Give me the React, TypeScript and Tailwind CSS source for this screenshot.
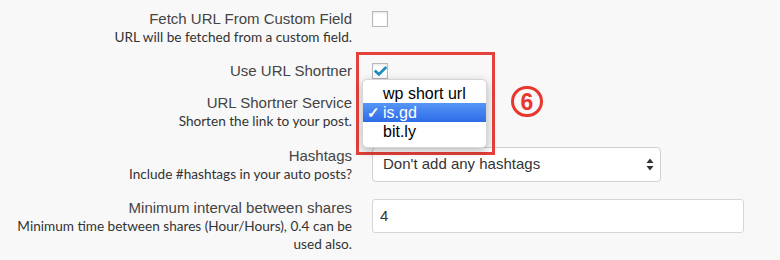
import { ReactNode } from 'react';

const labelFont = { fontFamily: '"Liberation Sans", Arial, sans-serif' };

function Checkbox({ checked = false }: { checked?: boolean }) {
  return (
    <div className="mt-[2px] w-4 h-4 bg-white border border-[#b4b9be] shadow-[inset_0_1px_2px_rgba(0,0,0,0.1)] flex items-center justify-center">
      {checked && (
        <svg width="13" height="11" viewBox="0 0 13 11">
          <path d="M1.8 5.6 L4.9 8.4 L11.3 2" fill="none" stroke="#1e8cbe" strokeWidth="2.8" strokeLinecap="square" />
        </svg>
      )}
    </div>
  );
}

function Row({ label, desc, height, children }: { label: string; desc?: ReactNode; height?: string; children?: ReactNode }) {
  return (
    <div className={`flex items-start gap-5 ${height ?? ''}`}>
      <div className="w-[352px] pl-3 shrink-0 text-right">
        <div className="text-[15px] leading-[19px] text-[#444]" style={labelFont}>{label}</div>
        {desc && (
          <div className="text-[13.6px] leading-[18px] text-[#333] font-['Lato',sans-serif]">{desc}</div>
        )}
      </div>
      <div className="relative flex-1">{children}</div>
    </div>
  );
}

export default function App() {
  return (
    <div className="relative w-[780px] h-[260px] bg-[#f8f8f8] pt-[9px] overflow-hidden">
      <Row label="Fetch URL From Custom Field" desc="URL will be fetched from a custom field." height="h-[52px]">
        <Checkbox />
      </Row>

      <Row label="Use URL Shortner" height="h-[32px]">
        <Checkbox checked />
      </Row>

      <Row label="URL Shortner Service" desc="Shorten the link to your post." height="h-[53px]">
        {/* open select popup */}
        <div
          className="absolute left-[-10px] top-[-14px] w-[125px] bg-white rounded-[5px] border border-[#d6d6d6] shadow-[0_3px_10px_rgba(0,0,0,0.28)] pt-1 pb-[6px] z-10"
          style={labelFont}
        >
          <div className="h-[19px] leading-[19px] pl-5 text-[16px] text-black">wp short url</div>
          <div className="relative h-[19px] leading-[19px] pl-5 text-[16px] text-white bg-gradient-to-b from-[#5795f6] to-[#2c6be6]">
            <span className="absolute left-[4px] top-0 text-[15px] font-bold">✓</span>
            is.gd
          </div>
          <div className="h-[19px] leading-[19px] pl-5 text-[16px] text-black">bit.ly</div>
        </div>
      </Row>

      <Row label="Hashtags" desc="Include #hashtags in your auto posts?" height="h-[52px]">
        <div className="mt-[1px] w-[289px] h-[35px] bg-white border border-[#d0d0d0] rounded-[4px] flex items-center justify-between pl-[10px] pr-[6px]">
          <span className="text-[15px] text-[#333]" style={labelFont}>Don't add any hashtags</span>
          <svg width="8" height="13" viewBox="0 0 8 13">
            <path d="M4 0.5 L7.5 5 L0.5 5 Z" fill="#333" />
            <path d="M4 12.5 L7.5 8 L0.5 8 Z" fill="#333" />
          </svg>
        </div>
      </Row>

      <Row
        label="Minimum interval between shares"
        desc="Minimum time between shares (Hour/Hours), 0.4 can be used also."
      >
        <div className="mt-[1px] w-[372px] h-[34px] bg-white border border-[#d6d6d6] rounded-[3px] flex items-center pl-[7px]">
          <span className="text-[15px] text-[#333]" style={labelFont}>4</span>
        </div>
      </Row>

      {/* annotation */}
      <div className="absolute left-[356px] top-[52px] w-[139px] h-[103px] border-[3px] border-[#e6403a] pointer-events-none" />
      <div className="absolute left-[511px] top-[86px] w-[32px] h-[31px] rounded-full border-[3px] border-[#e8372e] flex items-center justify-center">
        <span className="text-[23px] leading-none font-bold text-[#e8372e] mt-[1px]" style={labelFont}>6</span>
      </div>
    </div>
  );
}
